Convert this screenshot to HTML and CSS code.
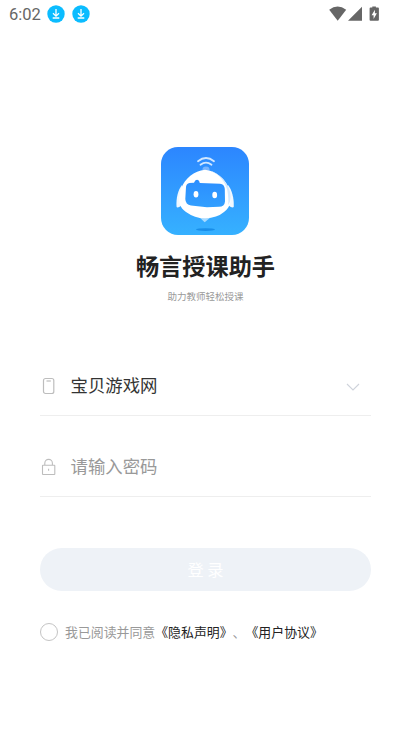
FILE: index.html
```html
<!DOCTYPE html>
<html lang="zh-CN">
<head>
<meta charset="utf-8">
<meta name="viewport" content="width=device-width, initial-scale=1">
<title>畅言授课助手</title>
<link rel="stylesheet" href="styles.css">
</head>
<body>
<header class="status">
  <div class="status-left">
    <span class="clock">6:02</span>
    <svg class="download" viewBox="0 0 18 18"><circle cx="9" cy="9" r="8.7" fill="#0bbcff"/><path d="M9 4v7M6 8.2l3 3 3-3M5.7 13h6.6" fill="none" stroke="#fff" stroke-width="1.3"/></svg>
    <svg class="download" viewBox="0 0 18 18"><circle cx="9" cy="9" r="8.7" fill="#0bbcff"/><path d="M9 4v7M6 8.2l3 3 3-3M5.7 13h6.6" fill="none" stroke="#fff" stroke-width="1.3"/></svg>
  </div>
  <svg class="status-right" width="52" height="16" viewBox="0 0 52 16" fill="#666"><path d="M.2 3.7Q8.5-2.5 17.2 3.7L8.7 14.7Z"/><path d="M33 .8V14.7H19Z"/><path d="M43.3 1.5V.5h3.6v1H49q.9 0 .9.9v11.4q0 .9-.9.9h-7.5q-.9 0-.9-.9V2.4q0-.9.9-.9Z"/><path d="M45.9 3.8v3.5h2L44.6 13V9.3h-2Z" fill="#fff"/></svg>
</header>
<main class="login">
  <svg class="logo" viewBox="0 0 88 88">
    <defs>
      <linearGradient id="sky" x1="0" y1="0" x2="0" y2="1"><stop offset="0" stop-color="#2c86ff"/><stop offset="1" stop-color="#36b1ff"/></linearGradient>
      <linearGradient id="face" x1="0" y1="0" x2="0" y2="1"><stop offset="0" stop-color="#2b8eff"/><stop offset="1" stop-color="#329fff"/></linearGradient>
    </defs>
    <rect width="88" height="88" rx="17" fill="url(#sky)"/>
    <g fill="none" stroke="#d1e7ff" stroke-width="1.8" stroke-linecap="round"><path d="M37 14.3Q45 7.8 53 14.3"/><path d="M39.5 17.8Q45 13.5 50.5 17.8"/></g>
    <path d="M41.5 23.5Q41 19.5 45 19.5T48.5 23.5Z" fill="#78b5ff"/>
    <path d="M38 70h12l-6.3 5.2Z" fill="#a9dbff"/>
    <path d="M21 38C17 43 15 51 15.5 59.5Q16 62.5 22 57Z" fill="#f0f8ff"/>
    <path d="M67 38C71 43 73 51 72.8 59.5Q72 62.5 66 57Z" fill="#f0f8ff"/>
    <path d="M44 22.7C33 24 24 31 20 42C16 54 19 61 25 65Q34 71.5 44.5 71.3Q56 71 63 65C70 60 71 52 68.5 43C65 32 55 23.7 44 22.7Z" fill="#fff"/>
    <path d="M49 23.8C58 27 63.5 34 66.3 43Q68 53 67 58C69.5 55 70.7 50 68.5 43C65 33 57 26 49 23.8Z" fill="#d3e9ff"/>
    <path d="M28.5 36L33 35.8Q34 32.8 36 32.8T38.8 36L59 36.7Q63.5 37.2 63.8 42L64 54.5Q63.5 59.8 58 59.8L46 60.3L30 58.5Q24.5 57.5 24.3 52L25 40Q25.3 36.4 28.5 36Z" fill="url(#face)"/>
    <ellipse cx="35" cy="47.3" rx="2.4" ry="3.2" fill="#fff"/><ellipse cx="53.7" cy="48" rx="2.4" ry="3.2" fill="#fff"/>
    <ellipse cx="44.5" cy="82.6" rx="9.5" ry="1.4" fill="#188de9"/>
  </svg>
  <h1 class="title">畅言授课助手</h1>
  <p class="subtitle">助力教师轻松授课</p>
  <div class="field">
    <svg class="field-icon" viewBox="0 0 17 18" fill="none" stroke="#bdbdbd" stroke-width="1.2"><rect x="3.5" y="1.5" width="10.3" height="15" rx="2"/><path d="M6.5 4h4.3"/></svg>
    <span class="field-text">宝贝游戏网</span>
    <svg class="chevron" viewBox="0 0 14 8" fill="none" stroke="#cfd3db" stroke-width="1.1"><path d="M1 1l6 6 6-6"/></svg>
  </div>
  <div class="field">
    <svg class="field-icon" viewBox="0 0 17 18" fill="none" stroke="#bdbdbd" stroke-width="1.1"><rect x="2.5" y="7.2" width="12.3" height="9.3" rx=".5"/><path d="M4.8 7V5.2a3.8 3.8 0 0 1 7.6 0V7M8.6 10.7v2"/></svg>
    <span class="field-text placeholder">请输入密码</span>
  </div>
  <button class="submit" type="button">登 录</button>
  <div class="agreement">
    <span class="radio"></span>
    <span class="terms">我已阅读并同意<span class="link">《隐私声明》</span>、<span class="link">《用户协议》</span></span>
  </div>
</main>
</body>
</html>
```

FILE: styles.css
```css
* { box-sizing: border-box; }
body {
  margin: 0;
  height: 731px;
  overflow: hidden;
  background: #fff;
  font-family: "Noto Sans CJK SC", sans-serif;
}
svg { display: block; flex: none; }
.status {
  height: 28px;
  padding: 0 30px 0 9px;
  display: flex;
  justify-content: space-between;
  align-items: center;
}
.status-left { display: flex; align-items: center; }
.clock {
  width: 38px;
  padding-top: 1px;
  font: 16.5px/20px Roboto, sans-serif;
  color: #666;
}
.download { width: 18px; height: 18px; margin-right: 7px; }
.status-right { margin-bottom: 1px; }
.login { padding: 119px 40px 0; }
.logo { width: 88px; height: 88px; margin-left: 121px; }
.title {
  margin: 13px 0 0;
  font-size: 23.2px;
  line-height: 34px;
  font-weight: 700;
  text-align: center;
  color: #222;
}
.subtitle {
  margin: 5px 0 30px;
  font-size: 9.5px;
  line-height: 18px;
  text-align: center;
  color: #999;
}
.field {
  height: 81px;
  padding: 21px 11px 0 0;
  display: flex;
  align-items: center;
  border-bottom: 1px solid #eee;
}
.field-icon { width: 17px; height: 18px; margin-right: 13.5px; }
.field-text {
  flex: 1;
  margin-top: -2px;
  font-size: 17.4px;
  line-height: 26px;
  color: #333;
}
.placeholder { color: #999; }
.chevron { width: 14px; height: 8px; margin-top: 2px; }
.submit {
  display: block;
  width: 331px;
  height: 43px;
  margin: 51px 0 0;
  padding: 0;
  border: 0;
  border-radius: 22px;
  background: #eef2f7;
  color: #fff;
  font: 16.3px/43px "Noto Sans CJK SC", sans-serif;
}
.agreement {
  display: flex;
  align-items: center;
  margin-top: 31px;
  height: 20px;
}
.radio {
  flex: none;
  width: 18px;
  height: 18px;
  margin-right: 7px;
  border: 1px solid #c4c4c4;
  border-radius: 50%;
}
.terms {
  font-size: 12.9px;
  line-height: 20px;
  white-space: nowrap;
  text-spacing-trim: space-all;
  color: #999;
}
.link { color: #222; }
```
